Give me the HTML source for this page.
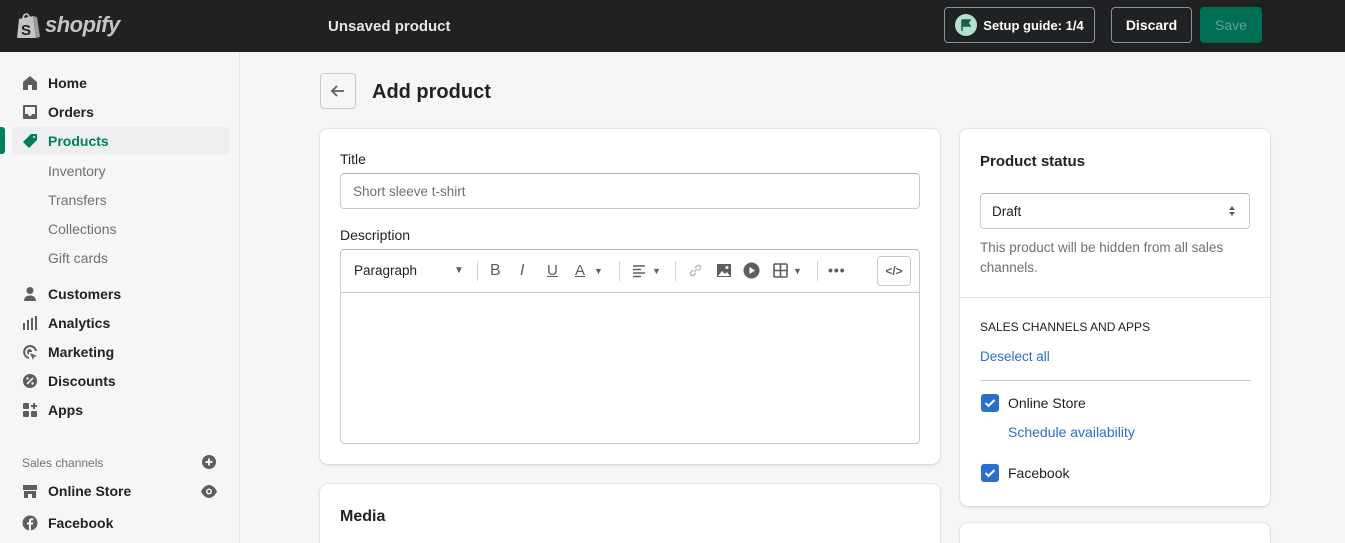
<!DOCTYPE html>
<html style="width:1345px;height:543px;overflow:hidden"><head><meta charset="utf-8"><style>
*{box-sizing:border-box;margin:0;padding:0}
body{width:1345px;height:543px;overflow:hidden;background:#f6f6f7;font-family:"Liberation Sans",sans-serif;font-size:14px;color:#202223;position:relative}
.a{position:absolute}
.top{left:0;top:0;width:1345px;height:52px;background:#202123}
.side{left:0;top:52px;width:240px;height:491px;background:#f6f6f7;border-right:1px solid #e1e3e5}
.nav{left:22px;font-size:14px;font-weight:bold;color:#202223;display:flex;align-items:center;gap:10px}
.nav svg{width:16px;height:16px;fill:#5c5f62}
.sub{left:48px;color:#6d7175;font-size:14px}
.card{background:#fff;border-radius:8px;box-shadow:0 0 0 1px rgba(63,63,68,.05),0 1px 3px rgba(63,63,68,.15)}
.btn{border:1px solid #8c9196;border-radius:4px;color:#fff;font-weight:bold;display:flex;align-items:center;justify-content:center;font-size:14px}
.input{border:1px solid #c9cccf;border-radius:4px;border-top-color:#aeb4b9}
.tb{color:#5c5f62;font-weight:bold}
.cb{width:18px;height:18px;background:#2c6ecb;border-radius:3px}
.link{color:#2c6ecb}
</style></head><body>
<div class="a top">
 <svg class="a" style="left:16px;top:11px" width="26" height="29" viewBox="0 0 26 29"><path d="M3 8 L17 5 L20 27 L1 27 Z" fill="#c4c4c4"/><path d="M17 5 L21 6 L24 26 L20 27 Z" fill="#9b9b9b"/><path d="M7 8 C7 2 13 1 13 7" stroke="#c4c4c4" stroke-width="1.6" fill="none"/><text x="5" y="24" font-size="15" font-weight="bold" fill="#202123" font-family="Liberation Sans">S</text></svg>
 <div class="a" style="left:45px;top:12px;font-size:22px;font-weight:bold;font-style:italic;color:#c4c4c4;letter-spacing:-0.5px">shopify</div>
 <div class="a" style="left:328px;top:18px;font-size:15px;font-weight:bold;color:#e3e5e7">Unsaved product</div>
 <div class="a btn" style="left:944px;top:7px;width:151px;height:36px;gap:6px"><span style="width:22px;height:22px;border-radius:50%;background:#b4e1cf;display:inline-flex;align-items:center;justify-content:center"><svg width="12" height="12" viewBox="0 0 12 12"><path d="M2 1v11M2 1h8l-2 3 2 3H2" fill="#1f5c48" stroke="#1f5c48" stroke-width="1.5"/></svg></span><span style="font-size:13px">Setup guide: 1/4</span></div>
 <div class="a btn" style="left:1111px;top:7px;width:81px;height:36px">Discard</div>
 <div class="a btn" style="left:1200px;top:7px;width:62px;height:36px;background:#006e52;border-color:#006e52;color:#5ea58a;font-weight:normal">Save</div>
</div>
<div class="a side"></div>
<div class="a" style="left:0;top:127px;width:5px;height:27px;background:#008060;border-radius:0 3px 3px 0"></div>
<div class="a" style="left:12px;top:127px;width:218px;height:27px;background:#edeeef;border-radius:4px"></div>
<div class="a nav" style="top:75px"><svg viewBox="0 0 16 16"><path d="M8 1 L15 7 V15 H10 V10 H6 V15 H1 V7 Z"/></svg>Home</div>
<div class="a nav" style="top:104px"><svg viewBox="0 0 16 16"><path d="M2 1h12a1 1 0 0 1 1 1v12a1 1 0 0 1-1 1H2a1 1 0 0 1-1-1V2a1 1 0 0 1 1-1zm1 2v7h3l1 2h2l1-2h3V3z"/></svg>Orders</div>
<div class="a nav" style="top:133px;color:#007f5f"><svg viewBox="0 0 16 16" style="fill:#007f5f"><path d="M9 1h6v6l-8 8-6-6zM12 3a1 1 0 1 0 .01 0z"/></svg>Products</div>
<div class="a sub" style="top:163px">Inventory</div>
<div class="a sub" style="top:192px">Transfers</div>
<div class="a sub" style="top:221px">Collections</div>
<div class="a sub" style="top:250px">Gift cards</div>
<div class="a nav" style="top:286px"><svg viewBox="0 0 16 16"><circle cx="8" cy="4.5" r="3.5"/><path d="M2 15c0-4 3-5.5 6-5.5s6 1.5 6 5.5z"/></svg>Customers</div>
<div class="a nav" style="top:315px"><svg viewBox="0 0 16 16"><rect x="1" y="8" width="2" height="7"/><rect x="5" y="5" width="2" height="10"/><rect x="9" y="3" width="2" height="12"/><rect x="13" y="1" width="2" height="14"/></svg>Analytics</div>
<div class="a nav" style="top:344px"><svg viewBox="0 0 16 16"><path d="M8 1a7 7 0 0 0-1 13.9V13A5 5 0 1 1 13 7h2A7 7 0 0 0 8 1zm0 4a3 3 0 0 0-1 5.8V8h3a3 3 0 0 0-2-3zm0 4 7 3-3 1-1 3z"/></svg>Marketing</div>
<div class="a nav" style="top:373px"><svg viewBox="0 0 16 16"><circle cx="8" cy="8" r="7"/><path d="M5 11 11 5" stroke="#f6f6f7" stroke-width="1.6"/><circle cx="5.5" cy="5.5" r="1.2" fill="#f6f6f7"/><circle cx="10.5" cy="10.5" r="1.2" fill="#f6f6f7"/></svg>Discounts</div>
<div class="a nav" style="top:402px"><svg viewBox="0 0 16 16"><rect x="1" y="1" width="6" height="6" rx="1"/><rect x="1" y="9" width="6" height="6" rx="1"/><rect x="9" y="9" width="6" height="6" rx="1"/><path d="M12 1v6M9 4h6" stroke="#5c5f62" stroke-width="2"/></svg>Apps</div>
<div class="a" style="left:22px;top:456px;font-size:12px;color:#6d7175">Sales channels</div>
<svg class="a" style="left:202px;top:455px" width="14" height="14" viewBox="0 0 14 14"><circle cx="7" cy="7" r="7" fill="#5c5f62"/><path d="M7 3.5v7M3.5 7h7" stroke="#fff" stroke-width="1.8"/></svg>
<div class="a nav" style="top:483px"><svg viewBox="0 0 16 16"><path d="M1 2h14v5H1zM2 8h12v7H10v-4H6v4H2z"/></svg>Online Store</div>
<svg class="a" style="left:200px;top:485px" width="18" height="13" viewBox="0 0 18 13"><path d="M9 0C4 0 1 6.5 1 6.5S4 13 9 13s8-6.5 8-6.5S14 0 9 0z" fill="#5c5f62"/><circle cx="9" cy="6.5" r="3" fill="#f6f6f7"/><circle cx="9" cy="6.5" r="1.5" fill="#5c5f62"/></svg>
<div class="a nav" style="top:515px"><svg viewBox="0 0 16 16"><circle cx="8" cy="8" r="7.5"/><path d="M9 16V9.5h2l.3-2H9V6.3c0-.6.2-1 1-1h1.3V3.5c-.3 0-1-.1-1.8-.1C7.9 3.4 7 4.3 7 6v1.5H5v2h2V16z" fill="#f6f6f7"/></svg>Facebook</div>

<div class="a" style="left:320px;top:73px;width:36px;height:36px;border:1px solid #c9cccf;border-radius:4px;display:flex;align-items:center;justify-content:center"><svg width="16" height="16" viewBox="0 0 16 16"><path d="M14 8H2M7 3 2 8l5 5" stroke="#5c5f62" stroke-width="1.8" fill="none"/></svg></div>
<div class="a" style="left:372px;top:81px;font-size:20px;font-weight:bold">Add product</div>

<div class="a card" style="left:320px;top:129px;width:620px;height:335px"></div>
<div class="a" style="left:340px;top:151px">Title</div>
<div class="a input" style="left:340px;top:173px;width:580px;height:36px;padding:10px 12px;color:#6d7175;font-size:13.5px">Short sleeve t-shirt</div>
<div class="a" style="left:340px;top:227px">Description</div>
<div class="a input" style="left:340px;top:249px;width:580px;height:195px"></div>
<div class="a" style="left:341px;top:292px;width:578px;height:1px;background:#c9cccf"></div>
<div class="a" style="left:354px;top:263px;color:#202223;font-size:13.5px">Paragraph</div>
<div class="a tb" style="left:454px;top:265px;font-size:10px">▼</div>
<div class="a" style="left:477px;top:261px;width:1px;height:20px;background:#d2d5d8"></div>
<div class="a tb" style="left:490px;top:262px;font-size:16px;font-weight:normal">B</div>
<div class="a tb" style="left:520px;top:262px;font-size:16px;font-style:italic;font-weight:normal">I</div>
<div class="a tb" style="left:547px;top:262px;font-size:15px;font-weight:normal;text-decoration:underline">U</div>
<div class="a tb" style="left:575px;top:262px;font-size:15px;font-weight:normal;text-decoration:underline">A</div>
<div class="a tb" style="left:594px;top:266px;font-size:9px">▼</div>
<div class="a" style="left:619px;top:261px;width:1px;height:20px;background:#d2d5d8"></div>
<svg class="a" style="left:632px;top:264px" width="14" height="14" viewBox="0 0 14 14"><path d="M1 2h12M1 5.5h8M1 9h12M1 12.5h8" stroke="#5c5f62" stroke-width="1.5"/></svg>
<div class="a tb" style="left:652px;top:266px;font-size:9px">▼</div>
<div class="a" style="left:675px;top:261px;width:1px;height:20px;background:#d2d5d8"></div>
<svg class="a" style="left:688px;top:263px" width="15" height="15" viewBox="0 0 15 15"><path d="M6 9l3-3M5 7 3 9a2 2 0 0 0 3 3l2-2M10 8l2-2a2 2 0 0 0-3-3L7 5" stroke="#b5b8bb" stroke-width="1.4" fill="none"/></svg>
<svg class="a" style="left:716px;top:263px" width="16" height="15" viewBox="0 0 16 15"><rect x="1" y="1" width="14" height="13" fill="#5c5f62"/><path d="M2 13l4-5 3 3 2-2 3 4z" fill="#fff"/><circle cx="11" cy="4.5" r="1.5" fill="#fff"/></svg>
<svg class="a" style="left:743px;top:262px" width="17" height="17" viewBox="0 0 17 17"><circle cx="8.5" cy="8.5" r="8" fill="#5c5f62"/><path d="M6.5 5v7l5.5-3.5z" fill="#fff"/></svg>
<svg class="a" style="left:773px;top:263px" width="15" height="15" viewBox="0 0 15 15"><rect x="1" y="1" width="13" height="13" rx="1" fill="none" stroke="#5c5f62" stroke-width="1.6"/><path d="M7.5 1v13M1 7.5h13" stroke="#5c5f62" stroke-width="1.6"/></svg>
<div class="a tb" style="left:793px;top:266px;font-size:9px">▼</div>
<div class="a" style="left:817px;top:261px;width:1px;height:20px;background:#d2d5d8"></div>
<div class="a tb" style="left:828px;top:262px;font-size:14px;letter-spacing:1px">•••</div>
<div class="a" style="left:877px;top:256px;width:34px;height:30px;border:1px solid #c9cccf;border-radius:4px;display:flex;align-items:center;justify-content:center;font-size:12px;font-weight:bold;color:#5c5f62">&lt;/&gt;</div>

<div class="a card" style="left:320px;top:484px;width:620px;height:59px;border-radius:8px 8px 0 0"></div>
<div class="a" style="left:340px;top:508px;font-size:16px;font-weight:bold">Media</div>

<div class="a card" style="left:960px;top:129px;width:310px;height:377px"></div>
<div class="a" style="left:980px;top:153px;font-size:15px;font-weight:bold">Product status</div>
<div class="a input" style="left:980px;top:193px;width:270px;height:36px;padding:10px 11px;font-size:13.5px">Draft</div>
<svg class="a" style="left:1228px;top:205px" width="8" height="12" viewBox="0 0 8 12"><path d="M4 1 7 5H1zM4 11 1 7h6z" fill="#5c5f62"/></svg>
<div class="a" style="left:980px;top:238px;width:275px;color:#6d7175;font-size:13.5px;line-height:20px">This product will be hidden from all sales channels.</div>
<div class="a" style="left:960px;top:297px;width:310px;height:1px;background:#e1e3e5"></div>
<div class="a" style="left:980px;top:320px;font-size:12px">SALES CHANNELS AND APPS</div>
<div class="a link" style="left:980px;top:349px;font-size:13.5px">Deselect all</div>
<div class="a" style="left:980px;top:380px;width:270px;height:1px;background:#c9cccf"></div>
<div class="a cb" style="left:981px;top:394px"><svg width="18" height="18" viewBox="0 0 18 18"><path d="M4.5 9l3 3 6-6" stroke="#fff" stroke-width="2" fill="none"/></svg></div>
<div class="a" style="left:1008px;top:395px;font-size:14px">Online Store</div>
<div class="a link" style="left:1008px;top:424px;font-size:14px">Schedule availability</div>
<div class="a cb" style="left:981px;top:464px"><svg width="18" height="18" viewBox="0 0 18 18"><path d="M4.5 9l3 3 6-6" stroke="#fff" stroke-width="2" fill="none"/></svg></div>
<div class="a" style="left:1008px;top:465px;font-size:14px">Facebook</div>
<div class="a card" style="left:960px;top:523px;width:310px;height:20px;border-radius:8px 8px 0 0"></div>
</body></html>
